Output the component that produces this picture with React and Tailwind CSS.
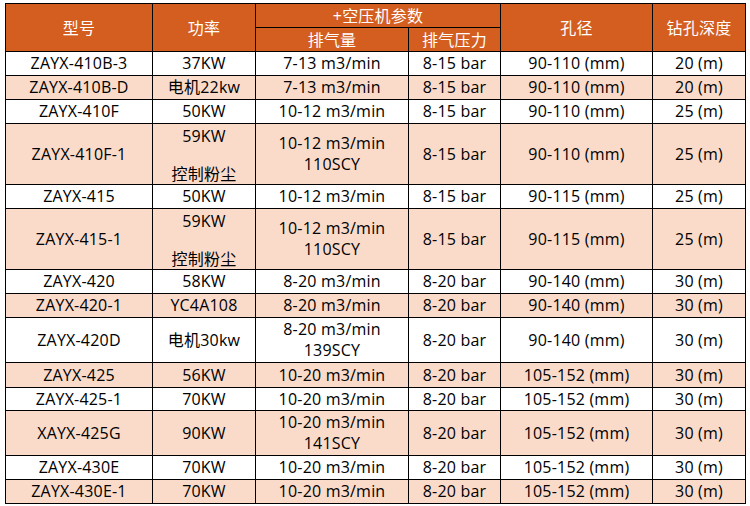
const rows = [
  { h: "h-[23px]", model: "ZAYX-410B-3", power: ["37KW"], air: ["7-13 m3/min"], pres: "8-15 bar", hole: "90-110 (mm)", depth: "20 (m)" },
  { h: "h-[23px]", model: "ZAYX-410B-D", power: ["电机22kw"], air: ["7-13 m3/min"], pres: "8-15 bar", hole: "90-110 (mm)", depth: "20 (m)" },
  { h: "h-[23px]", model: "ZAYX-410F", power: ["50KW"], air: ["10-12 m3/min"], pres: "8-15 bar", hole: "90-110 (mm)", depth: "25 (m)" },
  { h: "h-[60px]", model: "ZAYX-410F-1", power: ["59KW", "控制粉尘"], air: ["10-12 m3/min", "110SCY"], pres: "8-15 bar", hole: "90-110 (mm)", depth: "25 (m)" },
  { h: "h-[23px]", model: "ZAYX-415", power: ["50KW"], air: ["10-12 m3/min"], pres: "8-15 bar", hole: "90-115 (mm)", depth: "25 (m)" },
  { h: "h-[60px]", model: "ZAYX-415-1", power: ["59KW", "控制粉尘"], air: ["10-12 m3/min", "110SCY"], pres: "8-15 bar", hole: "90-115 (mm)", depth: "25 (m)" },
  { h: "h-[23px]", model: "ZAYX-420", power: ["58KW"], air: ["8-20 m3/min"], pres: "8-20 bar", hole: "90-140 (mm)", depth: "30 (m)" },
  { h: "h-[23px]", model: "ZAYX-420-1", power: ["YC4A108"], air: ["8-20 m3/min"], pres: "8-20 bar", hole: "90-140 (mm)", depth: "30 (m)" },
  { h: "h-[44px]", model: "ZAYX-420D", power: ["电机30kw"], air: ["8-20 m3/min", "139SCY"], pres: "8-20 bar", hole: "90-140 (mm)", depth: "30 (m)" },
  { h: "h-[24px]", model: "ZAYX-425", power: ["56KW"], air: ["10-20 m3/min"], pres: "8-20 bar", hole: "105-152 (mm)", depth: "30 (m)" },
  { h: "h-[22px]", model: "ZAYX-425-1", power: ["70KW"], air: ["10-20 m3/min"], pres: "8-20 bar", hole: "105-152 (mm)", depth: "30 (m)" },
  { h: "h-[44px]", model: "XAYX-425G", power: ["90KW"], air: ["10-20 m3/min", "141SCY"], pres: "8-20 bar", hole: "105-152 (mm)", depth: "30 (m)" },
  { h: "h-[23px]", model: "ZAYX-430E", power: ["70KW"], air: ["10-20 m3/min"], pres: "8-20 bar", hole: "105-152 (mm)", depth: "30 (m)" },
  { h: "h-[23px]", model: "ZAYX-430E-1", power: ["70KW"], air: ["10-20 m3/min"], pres: "8-20 bar", hole: "105-152 (mm)", depth: "30 (m)" },
];

function Cell({ bg, children }) {
  return (
    <div className={`${bg} flex flex-col items-center justify-center text-center leading-[21px]`}>
      {children}
    </div>
  );
}

function PowerCell({ bg, lines }) {
  if (lines.length === 2) {
    return (
      <div className={`${bg} flex flex-col items-center justify-between pt-[3px] leading-[19px]`}>
        <span>{lines[0]}</span>
        <span>{lines[1]}</span>
      </div>
    );
  }
  return <Cell bg={bg}>{lines[0]}</Cell>;
}

export default function App() {
  return (
    <div className="w-[750px] h-[506px] bg-white pt-[3px] pl-[5px]">
      <div
        className="inline-grid bg-black p-px gap-px text-[16px] text-black tracking-[0.2px]"
        style={{ fontFamily: '"Open Sans", "Noto Sans CJK SC", sans-serif' }}
      >
        <div className="grid grid-cols-[146px_102px_152px_91px_151px_92px] grid-rows-[23px_23px] gap-px text-white">
          <div className="row-span-2 bg-[#d35e1f] flex items-center justify-center">型号</div>
          <div className="row-span-2 bg-[#d35e1f] flex items-center justify-center">功率</div>
          <div className="col-span-2 bg-[#d35e1f] flex items-center justify-center">+空压机参数</div>
          <div className="row-span-2 bg-[#d35e1f] flex items-center justify-center">孔径</div>
          <div className="row-span-2 bg-[#d35e1f] flex items-center justify-center">钻孔深度</div>
          <div className="bg-[#d35e1f] flex items-center justify-center">排气量</div>
          <div className="bg-[#d35e1f] flex items-center justify-center">排气压力</div>
        </div>
        {rows.map((r, i) => {
          const bg = i % 2 === 1 ? "bg-[#fadbca]" : "bg-white";
          return (
            <div key={i} className={`grid grid-cols-[146px_102px_152px_91px_151px_92px] gap-px ${r.h}`}>
              <Cell bg={bg}>{r.model}</Cell>
              <PowerCell bg={bg} lines={r.power} />
              <Cell bg={bg}>
                {r.air.map((a, j) => (
                  <span key={j}>{a}</span>
                ))}
              </Cell>
              <Cell bg={bg}>{r.pres}</Cell>
              <Cell bg={bg}>{r.hole}</Cell>
              <Cell bg={bg}>{r.depth}</Cell>
            </div>
          );
        })}
      </div>
    </div>
  );
}
